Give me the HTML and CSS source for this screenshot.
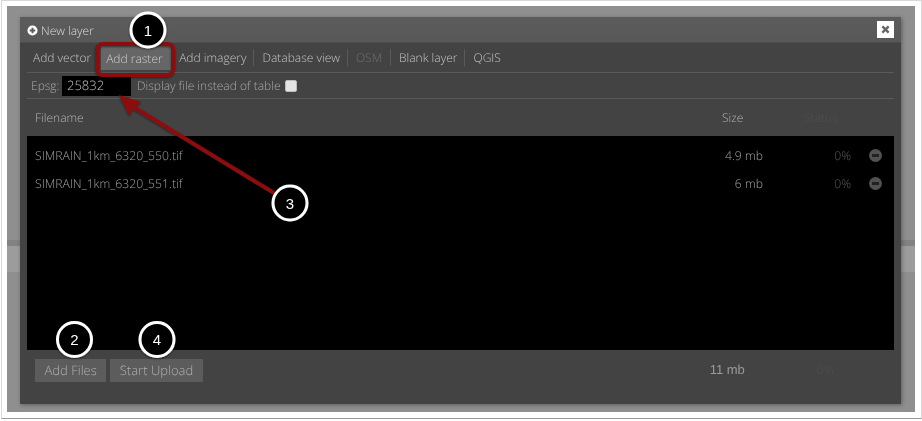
FILE: index.html
```html
<!DOCTYPE html>
<html lang="en">
<head>
<meta charset="utf-8">
<title>New layer</title>
<link rel="stylesheet" href="styles.css">
</head>
<body>
<div class="frame">
  <div class="backdrop">
    <div class="band"></div>
    <section class="dialog">
      <header class="title">
        <svg class="plus" viewBox="0 0 12 12" width="11" height="11"><circle cx="6" cy="6" r="5.5" fill="#fff"/><path d="M6 3v6M3 6h6" stroke="#5a5a5a" stroke-width="2"/></svg>
        <span class="title-text">New layer</span>
        <button class="close"><svg viewBox="0 0 10 10" width="9" height="9"><path d="M1.500 1.500l7 7M8.500 1.500l-7 7" stroke="#666" stroke-width="2.600"/></svg></button>
      </header>
      <div class="body">
        <nav class="tabs">
          <span class="tab first">Add vector</span>
          <span class="tab active">Add raster</span>
          <span class="tab">Add imagery</span>
          <span class="tab sep">Database view</span>
          <span class="tab sep dim">OSM</span>
          <span class="tab sep">Blank layer</span>
          <span class="tab sep">QGIS</span>
        </nav>
        <div class="epsg">
          <label class="epsg-label">Epsg:</label>
          <span class="epsg-input">25832</span>
          <span class="display">Display file instead of table</span>
          <span class="check"></span>
        </div>
        <div class="thead">
          <span class="c-name">Filename</span>
          <span class="c-size">Size</span>
          <span class="c-status">Status</span>
        </div>
        <div class="files">
          <div class="row">
            <span class="c-name">SIMRAIN_1km_6320_550.tif</span>
            <span class="r-size">4.9 mb</span>
            <span class="r-pct">0%</span>
            <span class="minus"></span>
          </div>
          <div class="row">
            <span class="c-name">SIMRAIN_1km_6320_551.tif</span>
            <span class="r-size">6 mb</span>
            <span class="r-pct">0%</span>
            <span class="minus"></span>
          </div>
        </div>
        <footer class="foot">
          <span class="btn">Add Files</span>
          <span class="btn">Start Upload</span>
          <span class="total">11 mb</span>
          <span class="total-pct">0%</span>
        </footer>
      </div>
    </section>
  </div>
  <svg class="marks" width="922" height="421" viewBox="0 0 922 421">
    <defs>
      <filter id="sh" x="-30%" y="-30%" width="160%" height="160%"><feDropShadow dx="0" dy="1" stdDeviation="1.200" flood-color="#000" flood-opacity=".5"/></filter>
    </defs>
    <rect class="hl" x="97" y="44" width="76" height="31" rx="6" filter="url(#sh)"/>
    <g filter="url(#sh)">
      <path class="arrow-line" d="M274 193L130 105"/>
      <path class="arrow-head" d="M119 95L141 102L133 108L129 116Z"/>
    </g>
    <g class="badge" filter="url(#sh)"><circle class="b-black" cx="148" cy="30" r="17"/><text x="148" y="35.500">1</text></g>
    <g class="badge" filter="url(#sh)"><circle class="b-black" cx="74.500" cy="339.500" r="17"/><text x="74.500" y="345">2</text></g>
    <g class="badge" filter="url(#sh)"><circle class="b-black" cx="157" cy="339.500" r="17"/><text x="157" y="345">4</text></g>
    <g class="badge" filter="url(#sh)"><circle class="b-black" cx="290" cy="203" r="17"/><text x="290" y="208.500">3</text></g>
  </svg>
</div>
</body>
</html>
```
FILE: styles.css
```css
* { box-sizing: border-box; }
html, body { margin: 0; padding: 0; }
body { width: 922px; height: 421px; overflow: hidden; background: #fff; font-family: "Open Sans", sans-serif; font-weight: 300; }
.frame { position: relative; width: 922px; height: 421px; padding: 6px 7px 9px 7px; background: #fff; }
.frame::after { content: ""; position: absolute; left: 1px; right: 0; top: 0; bottom: 2px; border: 1px solid #d8d8d8; border-bottom-color: #9a9a9a; pointer-events: none; }
.backdrop { position: relative; width: 908px; height: 406px; padding: 11px 14px 0 13px; background: #8f8f8f; }
.band { position: absolute; left: 0; right: 0; top: 234px; height: 32px; background: linear-gradient(#828282 0 6px, #9c9c9c 6px 100%); }
.dialog { position: relative; width: 881px; height: 387px; background: #444; box-shadow: 1px 1px 4px rgba(0,0,0,.35); display: flex; flex-direction: column; opacity: .999; text-rendering: geometricPrecision; }
.title { height: 26px; display: flex; align-items: center; padding: 1px 7px 0; background: linear-gradient(#5c5c5c, #585858); color: #dcdcdc; font-size: 12px; border-bottom: 1px solid #4d4d4d; flex: none; }
.plus { margin-right: 3px; flex: none; }
.title-text { flex: 1; }
.close { width: 17px; height: 17px; padding: 0; margin-top: -1px; border: 0; background: #fff; display: flex; align-items: center; justify-content: center; }
.body { flex: 1; padding: 0 7px; display: flex; flex-direction: column; background: #434343; color: #c8c8c8; }
.tabs { height: 30px; display: flex; align-items: center; border-bottom: 1px solid #5a5a5a; font-size: 12px; flex: none; }
.tab { padding: 0 7px 0 8px; height: 17px; line-height: 18px; white-space: nowrap; color: #c4c4c4; }
.tab.first { padding: 0 6px; }
.tab.active { background: #666; width: 70px; height: 24px; line-height: 25px; margin: 0 0 0 4px; padding: 0 0 0 5px; color: #cdcdcd; }
.tab.sep { border-left: 1px solid #5a5a5a; }
.tab.dim { color: #707070; padding-right: 8px; }
.epsg { height: 26px; display: flex; align-items: center; border-bottom: 1px solid #5a5a5a; font-size: 12px; flex: none; color: #a8a8a8; padding-left: 4px; }
.epsg-label { width: 31px; line-height: 20px; }
.epsg-input { width: 69px; height: 20px; background: #000; color: #c4c4c4; font-size: 13px; line-height: 18px; padding-left: 5px; margin-right: 6px; }
.display { line-height: 20px; }
.check { width: 12px; height: 12px; margin-left: 4px; background: #e4e4e4; border: 1px solid #bbb; border-radius: 2px; }
.thead { height: 37px; display: flex; align-items: center; font-size: 12px; color: #b4b4b4; flex: none; }
.c-name { padding-left: 8px; width: 695px; flex: none; }
.c-size { width: 82px; }
.c-status { color: #505050; }
.files { height: 214px; background: #000; padding-top: 5px; flex: none; font-size: 12.200px; color: #a2a2a2; }
.row { height: 28px; display: flex; align-items: center; }
.r-size { width: 41px; text-align: right; }
.r-pct { width: 88px; text-align: right; color: #5a5a5a; }
.minus { width: 13px; height: 13px; margin-left: 18px; border-radius: 50%; background: #515151; position: relative; }
.minus::after { content: ""; position: absolute; left: 3px; right: 3px; top: 5px; height: 3px; background: #222; }
.foot { display: flex; align-items: flex-start; padding: 9px 0 0 8px; font-size: 13px; }
.btn { height: 23px; line-height: 22px; padding: 0 9.500px; background: #5c5c5c; color: #b0b0b0; margin-right: 4px; }
.total { margin-left: 503px; line-height: 22px; color: #999; font-family: "Liberation Sans", sans-serif; font-weight: 400; font-size: 13px; }
.total-pct { margin-left: 72px; line-height: 22px; color: #505050; font-size: 12px; }
.marks { position: absolute; left: 0; top: 0; }
.hl { fill: none; stroke: #8c0d10; stroke-width: 4; }
.arrow-line { stroke: #8c0d10; stroke-width: 4; fill: none; }
.arrow-head { fill: #8c0d10; }
.b-black { fill: #000; stroke: #fff; stroke-width: 3; }
.badge text { fill: #fff; font-family: "Liberation Sans", sans-serif; font-size: 15px; font-weight: 400; text-anchor: middle; }
```
